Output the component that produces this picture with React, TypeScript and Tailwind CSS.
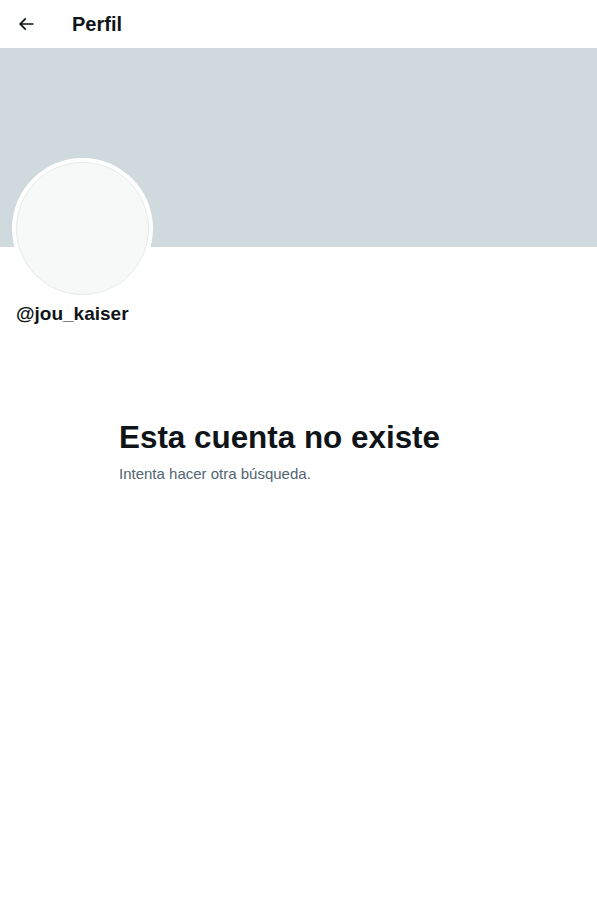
import React from "react";

const App = () => {
  return (
    <div className="w-[597px] min-h-[901px] bg-white text-[#0f1419] font-['Liberation_Sans',sans-serif]">
      {/* Header */}
      <div className="h-[48px] flex items-center px-4">
        <div className="w-[20px] flex items-center justify-center">
          <svg viewBox="0 0 24 24" className="w-[20px] h-[20px]" fill="#0f1419">
            <path d="M7.414 13l5.043 5.04-1.414 1.42L3.586 12l7.457-7.46 1.414 1.42L7.414 11H21v2H7.414z" />
          </svg>
        </div>
        <h2 className="ml-[36px] text-[20px] font-bold leading-6">Perfil</h2>
      </div>

      {/* Banner */}
      <div className="h-[199px] bg-[#cfd9de]" />

      {/* Avatar + handle */}
      <div className="px-3">
        <div className="-mt-[89px] w-[141px] h-[141px] rounded-full bg-white p-[4px]">
          <div className="w-full h-full rounded-full bg-[#f7f9f9] border border-[#e6eaec]" />
        </div>
        <div className="mt-[3px] px-1 text-[19px] font-bold leading-6">@jou_kaiser</div>
      </div>

      {/* Empty state */}
      <div className="mt-[94px] pl-[119px]">
        <h1 className="text-[31.4px] font-bold leading-9">Esta cuenta no existe</h1>
        <p className="mt-[8px] text-[15px] leading-5 text-[#536471]">Intenta hacer otra búsqueda.</p>
      </div>
    </div>
  );
};

export default App;
